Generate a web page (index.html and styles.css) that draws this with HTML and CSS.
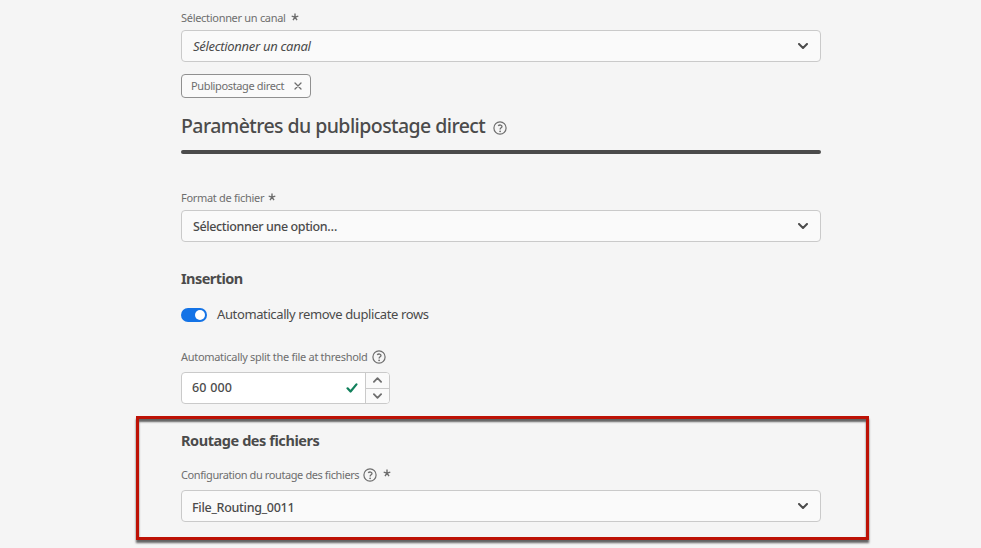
FILE: index.html
```
<!DOCTYPE html>
<html lang="fr">
<head>
<meta charset="utf-8">
<title>Paramètres du publipostage direct</title>
<link rel="stylesheet" href="styles.css">
</head>
<body>
<svg width="0" height="0" class="defs">
  <symbol id="star" viewBox="0 0 8 8"><path d="M4 4.2V.6M4 4.2 .7 3.1M4 4.2l3.3-1.1M4 4.2 2 7.1M4 4.2l2 2.9" fill="none" stroke="currentColor" stroke-width="1.4"/></symbol>
  <symbol id="chevron" viewBox="0 0 10 6"><path d="M1 1l4 4 4-4" fill="none" stroke="currentColor" stroke-width="2" stroke-linecap="round" stroke-linejoin="round"/></symbol>
  <symbol id="help" viewBox="0 0 14 14"><circle cx="7" cy="7" r="6.1" fill="none" stroke="currentColor" stroke-width="1.2"/><path d="M5.1 4.7C6.6 3.5 9 3.9 9 5.5 9 6.8 7.1 6.8 7.1 8.4" fill="none" stroke="currentColor" stroke-width="1.3"/><circle cx="7.1" cy="10.3" r=".9" fill="currentColor"/></symbol>
</svg>
<main class="form">
  <div class="label"><span>Sélectionner un canal</span><svg class="star"><use href="#star"/></svg></div>
  <div class="select"><span class="placeholder">Sélectionner un canal</span><svg class="chevron"><use href="#chevron"/></svg></div>
  <div class="tag"><span>Publipostage direct</span><svg class="close" viewBox="0 0 8 8"><path d="M1 1l6 6M7 1L1 7" fill="none" stroke="currentColor" stroke-width="1.3" stroke-linecap="round"/></svg></div>
  <h1 class="title"><span>Paramètres du publipostage direct</span><svg class="help"><use href="#help"/></svg></h1>
  <div class="label format"><span>Format de fichier</span><svg class="star"><use href="#star"/></svg></div>
  <div class="select"><span>Sélectionner une option…</span><svg class="chevron"><use href="#chevron"/></svg></div>
  <h2 class="subtitle">Insertion</h2>
  <div class="toggle"><i class="switch"></i><span>Automatically remove duplicate rows</span></div>
  <div class="label threshold"><span>Automatically split the file at threshold</span><svg class="help"><use href="#help"/></svg></div>
  <div class="number">
    <div class="value"><span>60 000</span><svg class="check" viewBox="0 0 10 9"><path d="M1 4.8l2.7 2.9L9 1.2" fill="none" stroke="currentColor" stroke-width="2" stroke-linecap="round" stroke-linejoin="round"/></svg></div>
    <div class="steps"><div class="step"><svg class="small up"><use href="#chevron"/></svg></div><div class="step"><svg class="small"><use href="#chevron"/></svg></div></div>
  </div>
  <section class="routing">
    <h2 class="subtitle">Routage des fichiers</h2>
    <div class="label"><span>Configuration du routage des fichiers</span><svg class="help"><use href="#help"/></svg><svg class="star raised"><use href="#star"/></svg></div>
    <div class="select"><span>File_Routing_0011</span><svg class="chevron"><use href="#chevron"/></svg></div>
  </section>
</main>
</body>
</html>
```
FILE: styles.css
```
* { box-sizing: border-box; }
body { margin: 0; height: 548px; overflow: hidden; background: #f5f5f5; color: #4b4b4b; font-family: "Noto Sans", "Open Sans", sans-serif; }
.defs { position: absolute; }
svg { flex: none; }
.form { width: 640px; margin-left: 181px; padding-top: 7px; }
.label { display: flex; align-items: center; height: 20px; margin-bottom: 3px; font-size: 11px; letter-spacing: -.3px; color: #6e6e6e; white-space: nowrap; }
.star { width: 8px; height: 8px; margin-left: 5px; }
.format .star { margin-left: 4px; }
.help { width: 14px; height: 14px; margin-left: 4px; color: #6e6e6e; }
.select { display: flex; align-items: center; justify-content: space-between; height: 32px; padding: 0 12px 0 11px; border: 1px solid #cacaca; border-radius: 4px; background: #fafafa; font-size: 12.5px; font-weight: 500; letter-spacing: -.38px; }
.placeholder { font-style: italic; font-weight: 400; font-size: 13px; letter-spacing: -.3px; }
.chevron { width: 10px; height: 6px; }
.tag { display: flex; align-items: center; justify-content: space-between; width: 130px; height: 24px; margin-top: 12px; padding: 0 8px 1px 9px; border: 1px solid #909090; border-radius: 4px; background: #fafafa; color: #6e6e6e; font-size: 11px; letter-spacing: -.36px; white-space: nowrap; }
.close { width: 8px; height: 8px; }
.title { position: relative; display: flex; align-items: center; height: 52px; margin: 0; padding-top: 2px; font-size: 19.5px; font-weight: 500; letter-spacing: -.57px; white-space: nowrap; }
.title .help { margin: 6px 0 0 8px; }
.title::after { content: ""; position: absolute; left: 0; right: 0; top: 52px; height: 4px; border-radius: 2px; background: #4b4b4b; }
.format { margin-top: 37px; }
.subtitle { display: flex; align-items: center; height: 20px; margin: 26px 0 0; font-size: 14.5px; font-weight: 700; letter-spacing: -.55px; }
.toggle { display: flex; align-items: center; height: 20px; margin-top: 17px; font-size: 13px; letter-spacing: -.38px; }
.toggle span { padding-bottom: 2px; }
.switch { display: flex; width: 26px; height: 14px; margin-right: 10px; padding: 2px; justify-content: flex-end; border-radius: 7px; background: #1473e6; }
.switch::after { content: ""; width: 10px; height: 10px; border-radius: 50%; background: #fff; }
.threshold { margin-top: 22px; margin-bottom: 5px; }
.threshold span { padding-bottom: 1px; }
.number { display: flex; width: 209px; height: 32px; border: 1px solid #cacaca; border-radius: 4px; background: #fff; overflow: hidden; font-size: 12.5px; font-weight: 500; letter-spacing: .2px; }
.value { display: flex; flex: 1; align-items: center; justify-content: space-between; padding: 0 7px 0 10px; }
.value span { padding-bottom: 1px; }
.check { width: 12px; height: 10px; color: #12805c; }
.steps { display: flex; flex-direction: column; width: 24px; border-left: 1px solid #cacaca; background: #fafafa; }
.step { display: flex; flex: 1; align-items: center; justify-content: center; color: #6e6e6e; }
.step + .step { border-top: 1px solid #cacaca; }
.small { width: 9px; height: 6px; }
.up { transform: rotate(180deg); }
.routing { width: 733px; height: 124px; margin: 12px 0 0 -45px; padding: 0 45px 0 42px; border: 3px solid #bd1206; box-shadow: 0 3px 2px rgba(0, 0, 0, .6), inset 0 3px 2px rgba(0, 0, 0, .6); }
.routing .subtitle { margin-top: 11px; letter-spacing: -.43px; }
.routing .label { margin-top: 15px; margin-bottom: 5px; letter-spacing: -.4px; }
.routing .label span { padding-bottom: 2px; }
.routing .select { padding-left: 10px; letter-spacing: -.28px; }
.routing .select span { padding-top: 2px; }
.star.raised { margin: 0 0 4px 6px; }
```
